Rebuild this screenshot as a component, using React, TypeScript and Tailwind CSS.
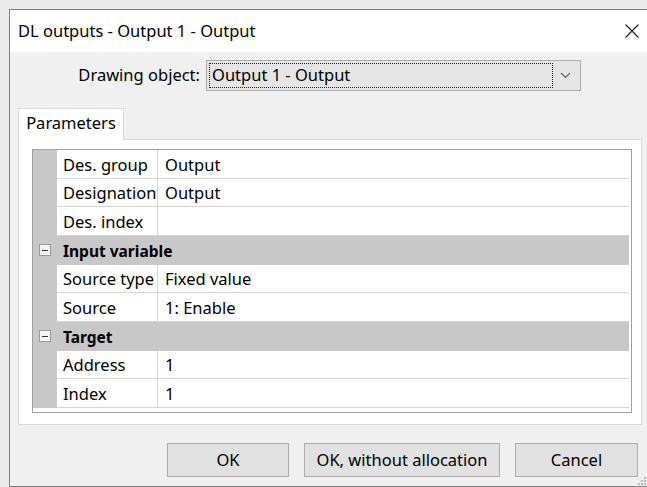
import React from "react";

type Row =
  | { kind: "field"; label: string; value: string }
  | { kind: "group"; label: string };

const rows: Row[] = [
  { kind: "field", label: "Des. group", value: "Output" },
  { kind: "field", label: "Designation", value: "Output" },
  { kind: "field", label: "Des. index", value: "" },
  { kind: "group", label: "Input variable" },
  { kind: "field", label: "Source type", value: "Fixed value" },
  { kind: "field", label: "Source", value: "1: Enable" },
  { kind: "group", label: "Target" },
  { kind: "field", label: "Address", value: "1" },
  { kind: "field", label: "Index", value: "1" },
];

const font = { fontFamily: '"Noto Sans", "Open Sans", sans-serif' };

function CollapseBox() {
  return (
    <div className="w-[12px] h-[12px] border border-[#9a9a9a] bg-[#f4f4f4] flex items-center justify-center">
      <div className="w-[6px] h-px bg-[#333]" />
    </div>
  );
}

function PropertyRow({ row }: { row: Row }) {
  if (row.kind === "group") {
    return (
      <div className="flex h-[28.67px] items-center">
        <div className="w-[24px] h-full flex items-center justify-center bg-[#c8c8c8]">
          <CollapseBox />
        </div>
        <div className="flex-1 h-full bg-[#c8c8c8] flex items-center pl-[6px] pt-[2px] font-bold text-[15.5px] text-black">
          {row.label}
        </div>
      </div>
    );
  }
  return (
    <div className="flex h-[28.67px]">
      <div className="w-[24px] h-full bg-[#c8c8c8]" />
      <div className="w-[101px] h-full border-b border-r border-[#d6d6d6] flex items-center pl-[6px] pt-[2px] text-black">
        {row.label}
      </div>
      <div className="flex-1 h-full border-b border-[#d6d6d6] flex items-center pl-[7px] pt-[2px] text-black">
        {row.value}
      </div>
    </div>
  );
}

function Button({ label, width }: { label: string; width: string }) {
  return (
    <button
      className={`${width} h-[34px] bg-[#e1e1e1] border border-[#adadad] text-black text-[16.5px]`}
      style={font}
    >
      {label}
    </button>
  );
}

export default function App() {
  return (
    <div
      className="w-[647px] h-[487px] bg-[#eaeaea] pl-[9px] pt-[9px] overflow-hidden text-[16.5px] leading-none"
      style={font}
    >
      <div className="w-[638px] h-[478px] border-l border-t border-b border-[#7e7e7e] bg-[#f0f0f0] flex flex-col relative">
        {/* title bar */}
        <div className="h-[42px] bg-white flex items-center justify-between pl-[8px] pr-[7px] shrink-0">
          <span className="text-[16.5px] text-black pt-[1px]">DL outputs - Output 1 - Output</span>
          <svg width="16" height="16" viewBox="0 0 16 16">
            <path d="M1.5 1.5 L14.5 14.5 M14.5 1.5 L1.5 14.5" stroke="#222" strokeWidth="1.2" fill="none" />
          </svg>
        </div>

        {/* drawing object selector */}
        <div className="flex items-center mt-[8px] h-[31px] shrink-0">
          <div className="w-[196px] text-right pr-[6px] text-black">Drawing object:</div>
          <div className="w-[375px] h-[31px] bg-[#e5e5e5] border border-[#adadad] flex items-center pl-[2px] pr-[2px]">
            <div className="w-[344px] h-[25px] border border-dotted border-[#222] flex items-center pl-[2px] text-black">
              Output 1 - Output
            </div>
            <div className="flex-1 flex items-center justify-center">
              <svg width="11" height="7" viewBox="0 0 11 7">
                <path d="M1 1 L5.5 5.5 L10 1" stroke="#606060" strokeWidth="1.2" fill="none" />
              </svg>
            </div>
          </div>
        </div>

        {/* tabs */}
        <div className="ml-[8px] mt-[17px] w-[624px] shrink-0">
          <div className="flex">
            <div className="w-[106px] h-[32px] bg-white border border-b-0 border-[#d9d9d9] flex items-center justify-center pb-[3px] text-black -mb-px relative z-10">
              Parameters
            </div>
          </div>
          <div className="h-[286px] bg-white border border-[#d9d9d9] pl-[13px] pt-[9px] pr-[9px]">
            <div className="h-[264px] border border-[#a0a0a0] bg-white pr-[2px]">
              {rows.map((row, i) => (
                <PropertyRow key={i} row={row} />
              ))}
            </div>
          </div>
        </div>

        {/* dialog buttons */}
        <div className="flex mt-[18px] pl-[157px] gap-[15px]">
          <Button label="OK" width="w-[122px]" />
          <Button label="OK, without allocation" width="w-[196px]" />
          <Button label="Cancel" width="w-[123px]" />
        </div>

        {/* size grip */}
        <svg className="absolute right-[1px] bottom-[1px]" width="10" height="10" viewBox="0 0 10 10">
          <g fill="#b8b8b8">
            <rect x="8" y="2" width="2" height="2" />
            <rect x="5" y="5" width="2" height="2" />
            <rect x="8" y="5" width="2" height="2" />
            <rect x="2" y="8" width="2" height="2" />
            <rect x="5" y="8" width="2" height="2" />
            <rect x="8" y="8" width="2" height="2" />
          </g>
        </svg>
      </div>
    </div>
  );
}
